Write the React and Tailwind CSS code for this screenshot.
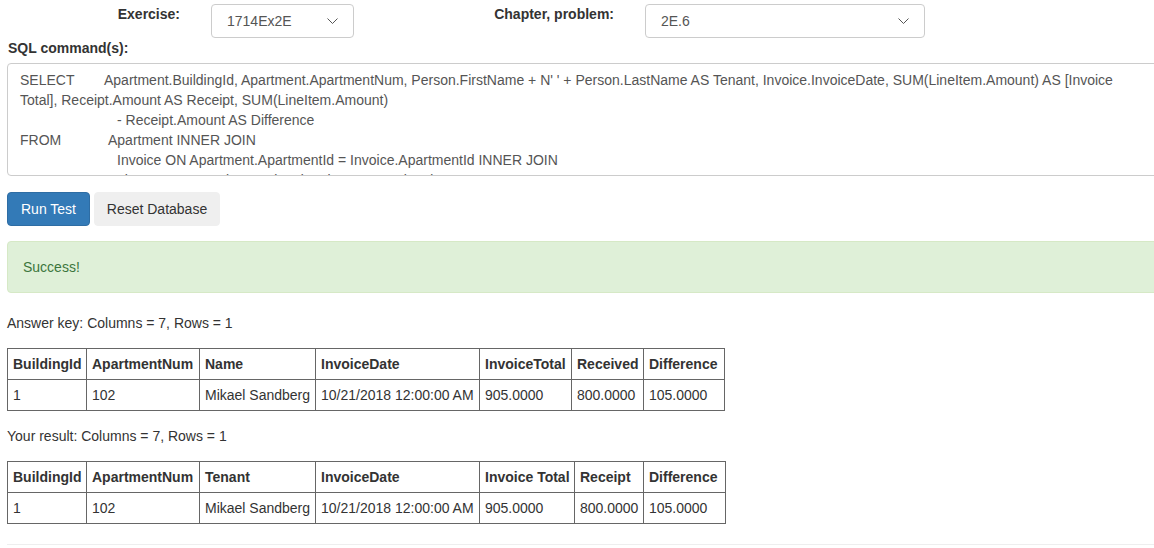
import React from "react";

function Chevron() {
  return (
    <svg width="11" height="6" viewBox="0 0 11 6" className="shrink-0">
      <polyline points="0.5,0.5 5.5,5.5 10.5,0.5" fill="none" stroke="#555" strokeWidth="1" />
    </svg>
  );
}

function Select({ value, width }) {
  return (
    <div
      className={`flex h-[34px] items-center justify-between rounded-[4px] border border-[#ccc] bg-white pl-[15px] pr-[15px] text-[14px] text-[#555] ${width}`}
    >
      <span>{value}</span>
      <Chevron />
    </div>
  );
}

function DataTable({ headers, row, cols, width }) {
  return (
    <table className={`table-fixed border-collapse border border-[#666] text-[14px] text-[#333] ${width}`}>
      <colgroup>
        {cols.map((c, i) => (
          <col key={i} className={c} />
        ))}
      </colgroup>
      <thead>
        <tr>
          {headers.map((h) => (
            <th key={h} className="h-[31px] border border-[#666] px-[5px] text-left font-bold leading-[20px] whitespace-nowrap overflow-hidden">
              {h}
            </th>
          ))}
        </tr>
      </thead>
      <tbody>
        <tr>
          {row.map((c, i) => (
            <td key={i} className="h-[31px] border border-[#666] px-[5px] leading-[20px] whitespace-nowrap overflow-hidden">
              {c}
            </td>
          ))}
        </tr>
      </tbody>
    </table>
  );
}

export default function App() {
  const font = { fontFamily: '"Liberation Sans", Arial, sans-serif' };
  const row = ["1", "102", "Mikael Sandberg", "10/21/2018 12:00:00 AM", "905.0000", "800.0000", "105.0000"];
  return (
    <div className="w-[1154px] h-[548px] overflow-hidden bg-white text-[14px] leading-[20px] text-[#333]" style={font}>
      <div className="flex items-start pt-[4px]">
        <div className="w-[180px] text-right font-bold">Exercise:</div>
        <div className="ml-[31px]">
          <Select value="1714Ex2E" width="w-[143px]" />
        </div>
        <div className="w-[260px] text-right font-bold">Chapter, problem:</div>
        <div className="ml-[31px]">
          <Select value="2E.6" width="w-[280px]" />
        </div>
      </div>

      <div className="pl-[8px] font-bold">SQL command(s):</div>

      <div className="ml-[7px] mt-[5px] h-[113px] w-[1180px] overflow-hidden rounded-[4px] border border-[#ccc] bg-white px-[12px] pt-[6px] text-[#555] whitespace-pre">
        <div className="flex">
          <span className="w-[84px] shrink-0">SELECT</span>
          <span>Apartment.BuildingId, Apartment.ApartmentNum, Person.FirstName + N' ' + Person.LastName AS Tenant, Invoice.InvoiceDate, SUM(LineItem.Amount) AS [Invoice</span>
        </div>
        <div>Total], Receipt.Amount AS Receipt, SUM(LineItem.Amount)</div>
        <div className="pl-[97px]">- Receipt.Amount AS Difference</div>
        <div className="flex">
          <span className="w-[88px] shrink-0">FROM</span>
          <span>Apartment INNER JOIN</span>
        </div>
        <div className="pl-[97px]">Invoice ON Apartment.ApartmentId = Invoice.ApartmentId INNER JOIN</div>
        <div className="pl-[97px]">LineItem ON Invoice.InvoiceId = LineItem.InvoiceId INNER JOIN</div>
      </div>

      <div className="ml-[7px] mt-[16px] flex gap-[4px]">
        <button className="h-[34px] w-[83px] rounded-[4px] border border-[#2e6da4] bg-[#337ab7] text-white">Run Test</button>
        <button className="h-[34px] w-[126px] rounded-[4px] border border-[#efefef] bg-[#efefef] text-[#333]">Reset Database</button>
      </div>

      <div className="ml-[7px] mt-[15px] w-[1180px] rounded-[4px] border border-[#d6e9c6] bg-[#dff0d8] p-[15px] text-[#3c763d]">
        Success!
      </div>

      <div className="ml-[7px] mt-[20px]">Answer key: Columns = 7, Rows = 1</div>
      <div className="ml-[7px] mt-[15px]">
        <DataTable
          headers={["BuildingId", "ApartmentNum", "Name", "InvoiceDate", "InvoiceTotal", "Received", "Difference"]}
          row={row}
          width="w-[717px]"
          cols={["w-[79px]", "w-[113px]", "w-[116px]", "w-[164px]", "w-[92px]", "w-[72px]", "w-[81px]"]}
        />
      </div>

      <div className="ml-[7px] mt-[15px]">Your result: Columns = 7, Rows = 1</div>
      <div className="ml-[7px] mt-[15px]">
        <DataTable
          headers={["BuildingId", "ApartmentNum", "Tenant", "InvoiceDate", "Invoice Total", "Receipt", "Difference"]}
          row={row}
          width="w-[718px]"
          cols={["w-[79px]", "w-[113px]", "w-[116px]", "w-[164px]", "w-[95px]", "w-[69px]", "w-[82px]"]}
        />
      </div>

      <div className="ml-[7px] mt-[20px] h-px w-[1180px] bg-[#eee]" />
    </div>
  );
}
